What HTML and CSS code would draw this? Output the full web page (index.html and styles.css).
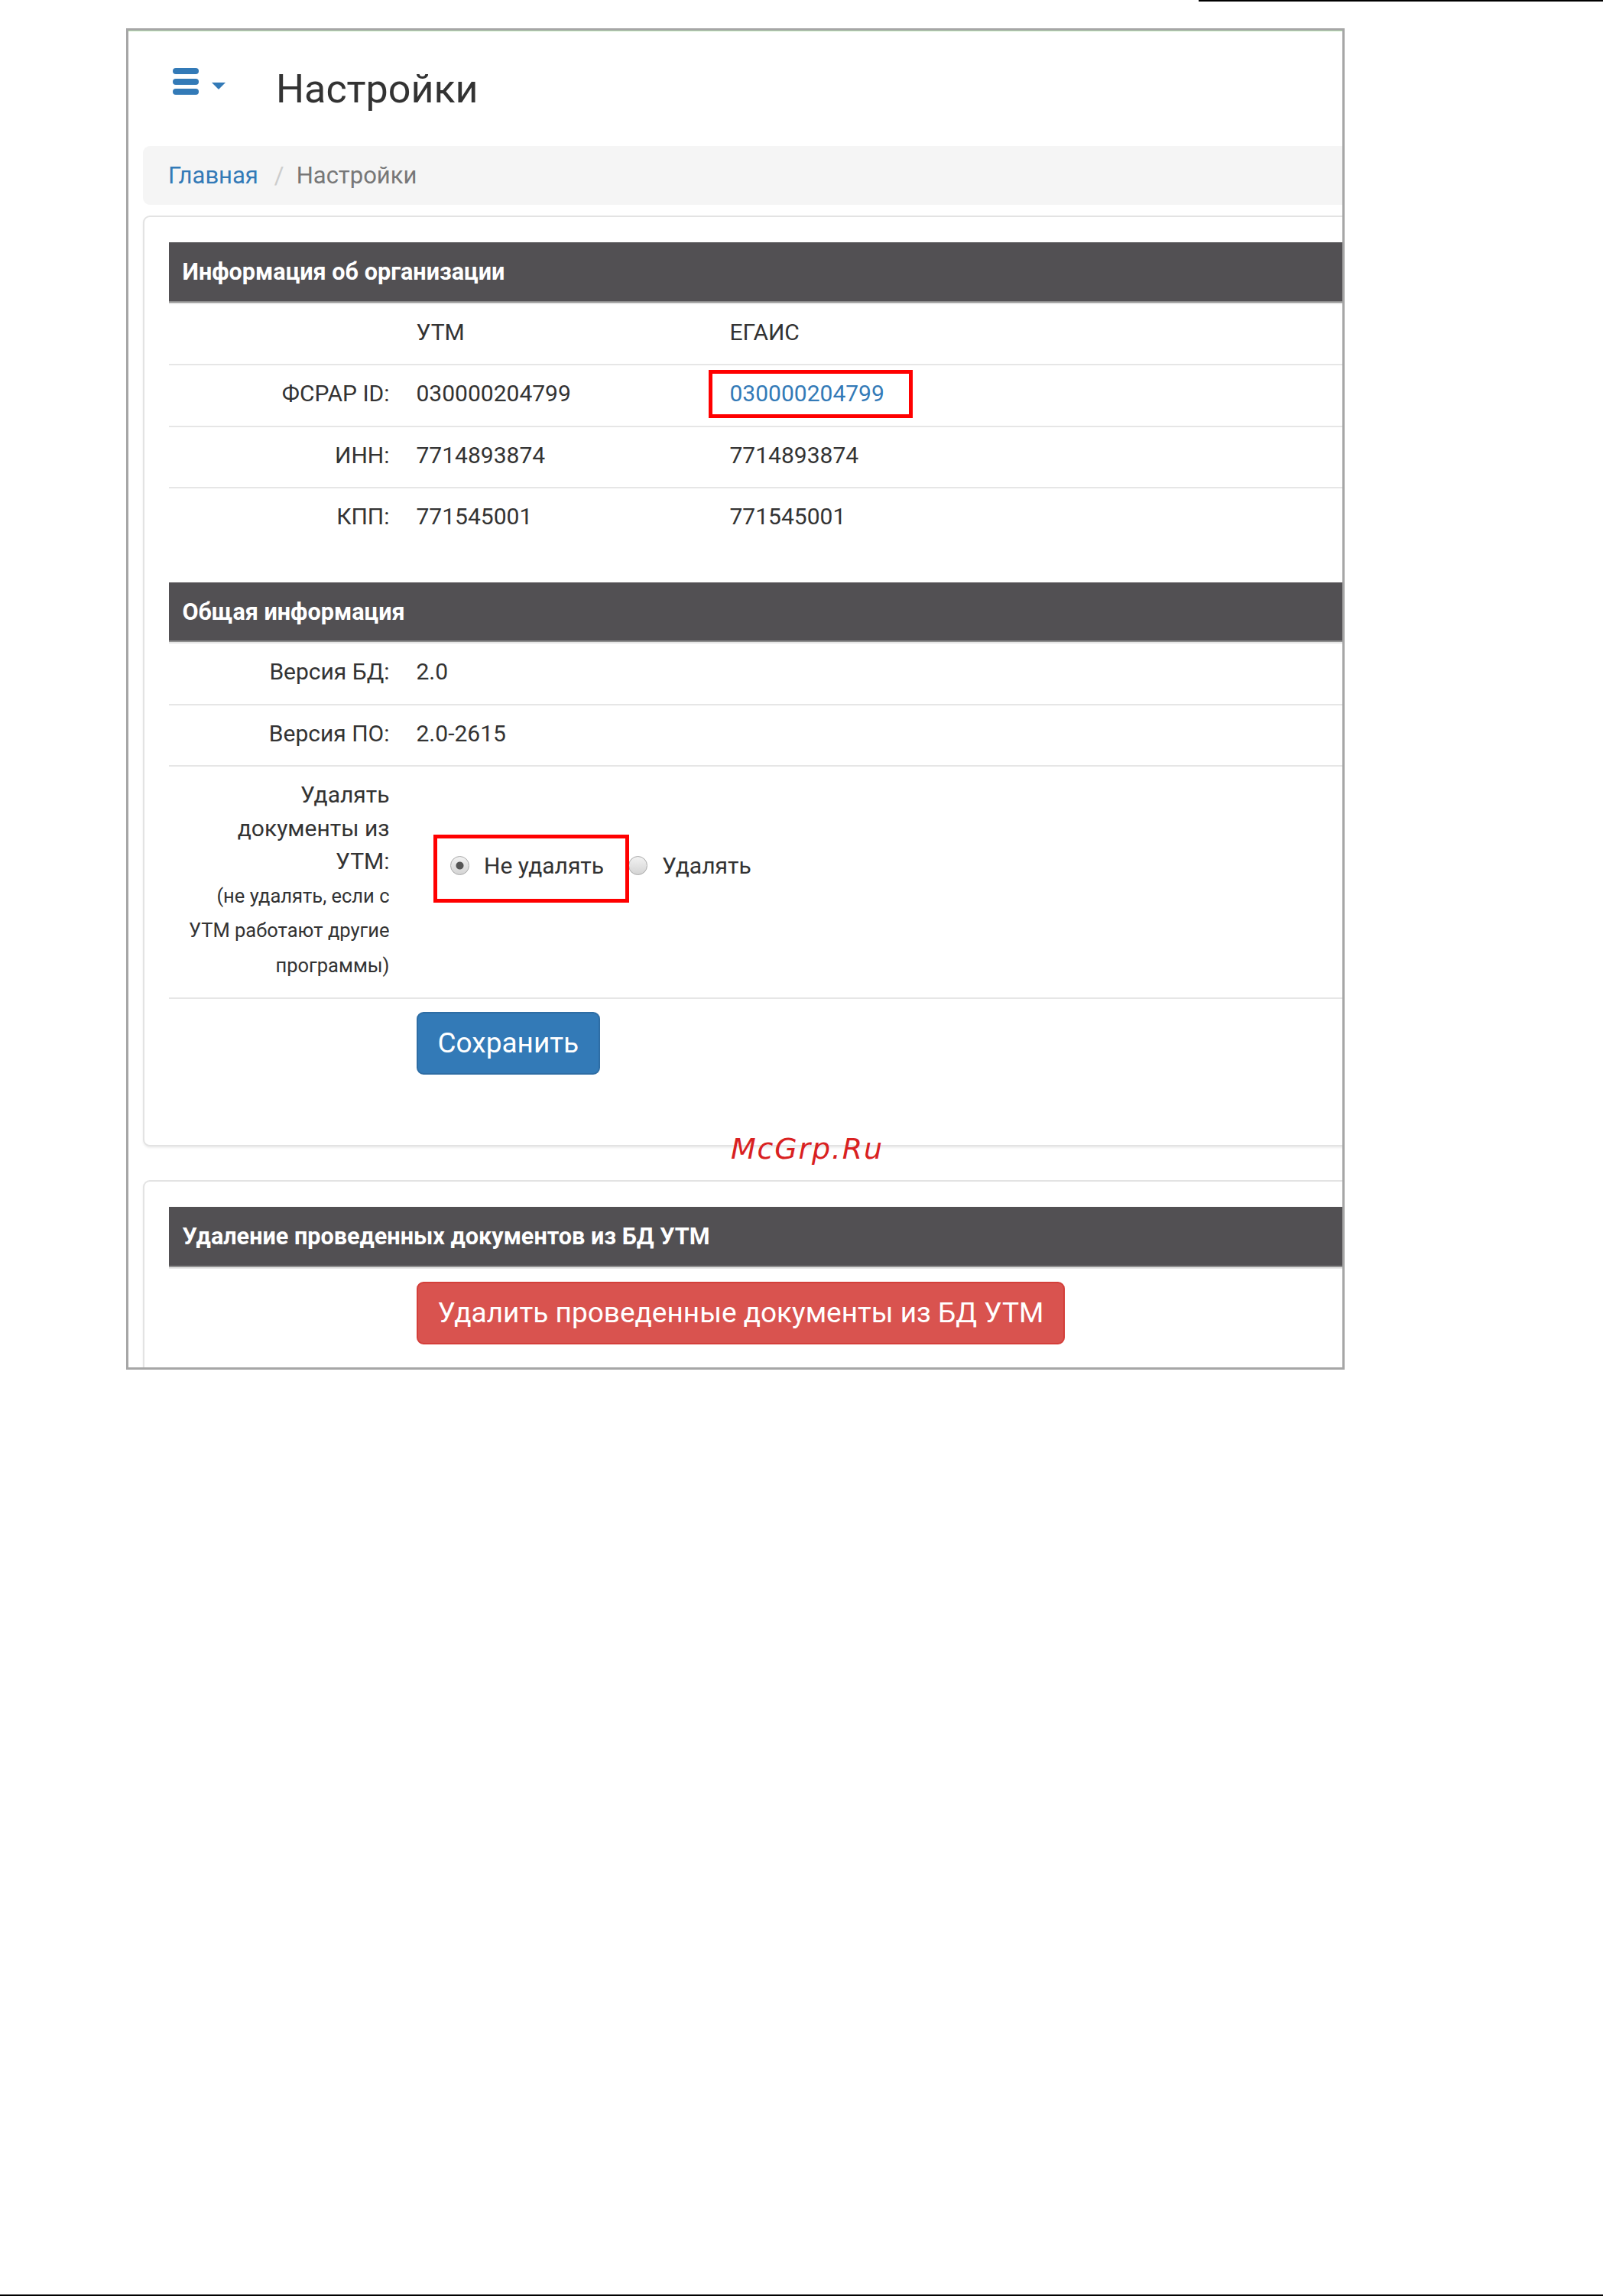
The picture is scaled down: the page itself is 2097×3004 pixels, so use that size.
FILE: index.html
```html
<!DOCTYPE html>
<html lang="ru">
<head>
  <meta charset="UTF-8">
  <title>Настройки</title>
  <link rel="stylesheet" href="styles.css">
</head>
<body>
  <div class="topline"></div>

  <div class="frame">
    <div class="page">
      <div class="header">
        <svg class="menu-icon" width="34" height="35" viewBox="0 0 34 35">
          <rect x="0" y="0" width="34" height="8" rx="4" fill="#337ab7"/>
          <rect x="0" y="14" width="34" height="8" rx="4" fill="#337ab7"/>
          <rect x="0" y="27" width="34" height="8" rx="4" fill="#337ab7"/>
        </svg>
        <svg class="caret" width="18" height="9" viewBox="0 0 18 9">
          <polygon points="0,0 18,0 9,9" fill="#337ab7"/>
        </svg>
        <h1 class="title">Настройки</h1>
      </div>

      <ul class="breadcrumb">
        <li><a href="#">Главная</a></li>
        <li class="active">Настройки</li>
      </ul>

      <div class="panel">
        <div class="info">
          <div class="info-head">Информация об организации</div>
          <div class="info-row">
            <div class="label"></div>
            <div>УТМ</div>
            <div>ЕГАИС</div>
          </div>
          <div class="info-row">
            <div class="label">ФСРАР ID:</div>
            <div>030000204799</div>
            <div><a class="link" href="#">030000204799</a></div>
          </div>
          <div class="info-row">
            <div class="label">ИНН:</div>
            <div>7714893874</div>
            <div>7714893874</div>
          </div>
          <div class="info-row">
            <div class="label">КПП:</div>
            <div>771545001</div>
            <div>771545001</div>
          </div>
        </div>

        <div class="info">
          <div class="info-head">Общая информация</div>
          <div class="info-row">
            <div class="label">Версия БД:</div>
            <div>2.0</div>
            <div></div>
          </div>
          <div class="info-row">
            <div class="label">Версия ПО:</div>
            <div>2.0-2615</div>
            <div></div>
          </div>
          <div class="info-row">
            <div class="label">Удалять<br>документы из<br>УТМ:<br><small>(не удалять, если с<br>УТМ работают другие<br>программы)</small></div>
            <div class="radio-cell">
              <div class="radios">
                <label class="radio-label"><input class="radio" type="radio" name="del" checked>Не удалять</label>
                <label class="radio-label"><input class="radio" type="radio" name="del">Удалять</label>
              </div>
            </div>
          </div>
          <div class="info-row">
            <div class="label"></div>
            <div class="btn-cell"><button class="btn btn-primary">Сохранить</button></div>
          </div>
        </div>
      </div>

      <div class="panel">
        <div class="info">
          <div class="info-head">Удаление проведенных документов из БД УТМ</div>
          <div class="info-row">
            <div class="label"></div>
            <div class="btn-cell"><button class="btn btn-danger">Удалить проведенные документы из БД УТМ</button></div>
          </div>
        </div>
      </div>
    </div>

    <div class="highlight highlight-id"></div>
    <div class="highlight highlight-radio"></div>
    <div class="watermark">McGrp.Ru</div>
  </div>

  <div class="bottomline"></div>
</body>
</html>
```

FILE: styles.css
```css
body { margin: 0; font-family: Roboto, "Liberation Sans", sans-serif; color: #333; background: #fff; }
.topline { margin-left: 1568px; height: 2px; background: #000; }
.bottomline { margin-top: 1210px; height: 2px; background: #000; }

.frame { position: relative; box-sizing: border-box; width: 1594px; height: 1755px; margin: 35px 0 0 165px; border: 3px solid #a6a6a6; overflow: hidden; }
.page { width: 1800px; padding-left: 19px; border-top: 1px solid #b6e3b0; }

/* шапка */
.header { display: flex; align-items: flex-start; height: 150px; padding-left: 39px; }
.menu-icon { margin-top: 48px; }
.caret { margin: 67px 0 0 17px; }
.title { margin: 50px 0 0 66px; font-size: 52px; line-height: 52px; font-weight: 400; color: #333; }

.breadcrumb { display: flex; margin: 0; padding: 17px 33px; list-style: none; background: #f5f5f5; border-radius: 9px; font-size: 31px; line-height: 43px; }
.breadcrumb li + li::before { content: "/"; padding: 0 16px 0 21px; color: #ccc; }
.breadcrumb a { color: #337ab7; text-decoration: none; }
.breadcrumb .active { color: #777; }

/* панели */
.panel { margin-top: 14px; padding: 33px 32px 1px; border: 2px solid #e3e3e3; border-radius: 9px; box-shadow: 0 2px 3px rgba(0, 0, 0, .07); background: #fff; }
.panel + .panel { margin-top: 44px; }
.info { margin-bottom: 44px; }
.info:last-child { margin-bottom: 73px; }
.info-head { padding: 17px 17.5px 18px; background: #525053; color: #fff; font-weight: 700; font-size: 30.6px; line-height: 43.5px; box-shadow: inset 0 -2px 0 #8e8e8e; }
.info-row { display: grid; grid-template-columns: 306px 410px 1fr; border-top: 2px solid #e6e6e6; }
.info-row > div { padding: 15px 17.5px 20px; font-size: 30px; line-height: 43.5px; }
.info-row .label { text-align: right; }
.label small { font-size: 25.5px; }
.link { color: #337ab7; text-decoration: none; }

.radio-cell { grid-column: 2 / 4; display: flex; align-items: center; }
.radios { display: flex; align-items: center; margin: 0 0 38px 44.5px; white-space: nowrap; }
.radio-label { display: flex; align-items: center; }
.radio-label + .radio-label { margin-left: 32px; }
.radio { appearance: none; -webkit-appearance: none; box-sizing: border-box; flex: none; width: 25px; height: 25px; margin: 0 19px 0 0; border: 1.5px solid #aaa; border-radius: 50%; background: linear-gradient(#f2f2f2, #d4d4d4); }
.radio:checked { background: radial-gradient(circle, #555 0 4.5px, transparent 5.5px), linear-gradient(#f2f2f2, #d4d4d4); }

.info-row > .btn-cell { grid-column: 2 / 4; display: flex; align-items: flex-start; padding: 17px 17.5px 18px; }
.btn { padding: 17px 26px; border: 2px solid; border-radius: 9px; font-family: Roboto, "Liberation Sans", sans-serif; font-size: 37px; line-height: 44px; white-space: nowrap; color: #fff; cursor: pointer; }
.btn-primary { background: #337ab7; border-color: #2e6da4; }
.btn-danger { background: #d9534f; border-color: #d43f3a; }

/* пометки поверх скриншота */
.highlight { position: absolute; box-sizing: border-box; border: 5px solid #f00; }
.highlight-id { left: 759px; top: 444px; width: 267px; height: 63px; }
.highlight-radio { left: 399px; top: 1052px; width: 256px; height: 89px; }
.watermark { position: absolute; left: 788px; top: 1444px; font: italic 38px/38px "DejaVu Sans", sans-serif; letter-spacing: 1.8px; color: #d92121; }
```
